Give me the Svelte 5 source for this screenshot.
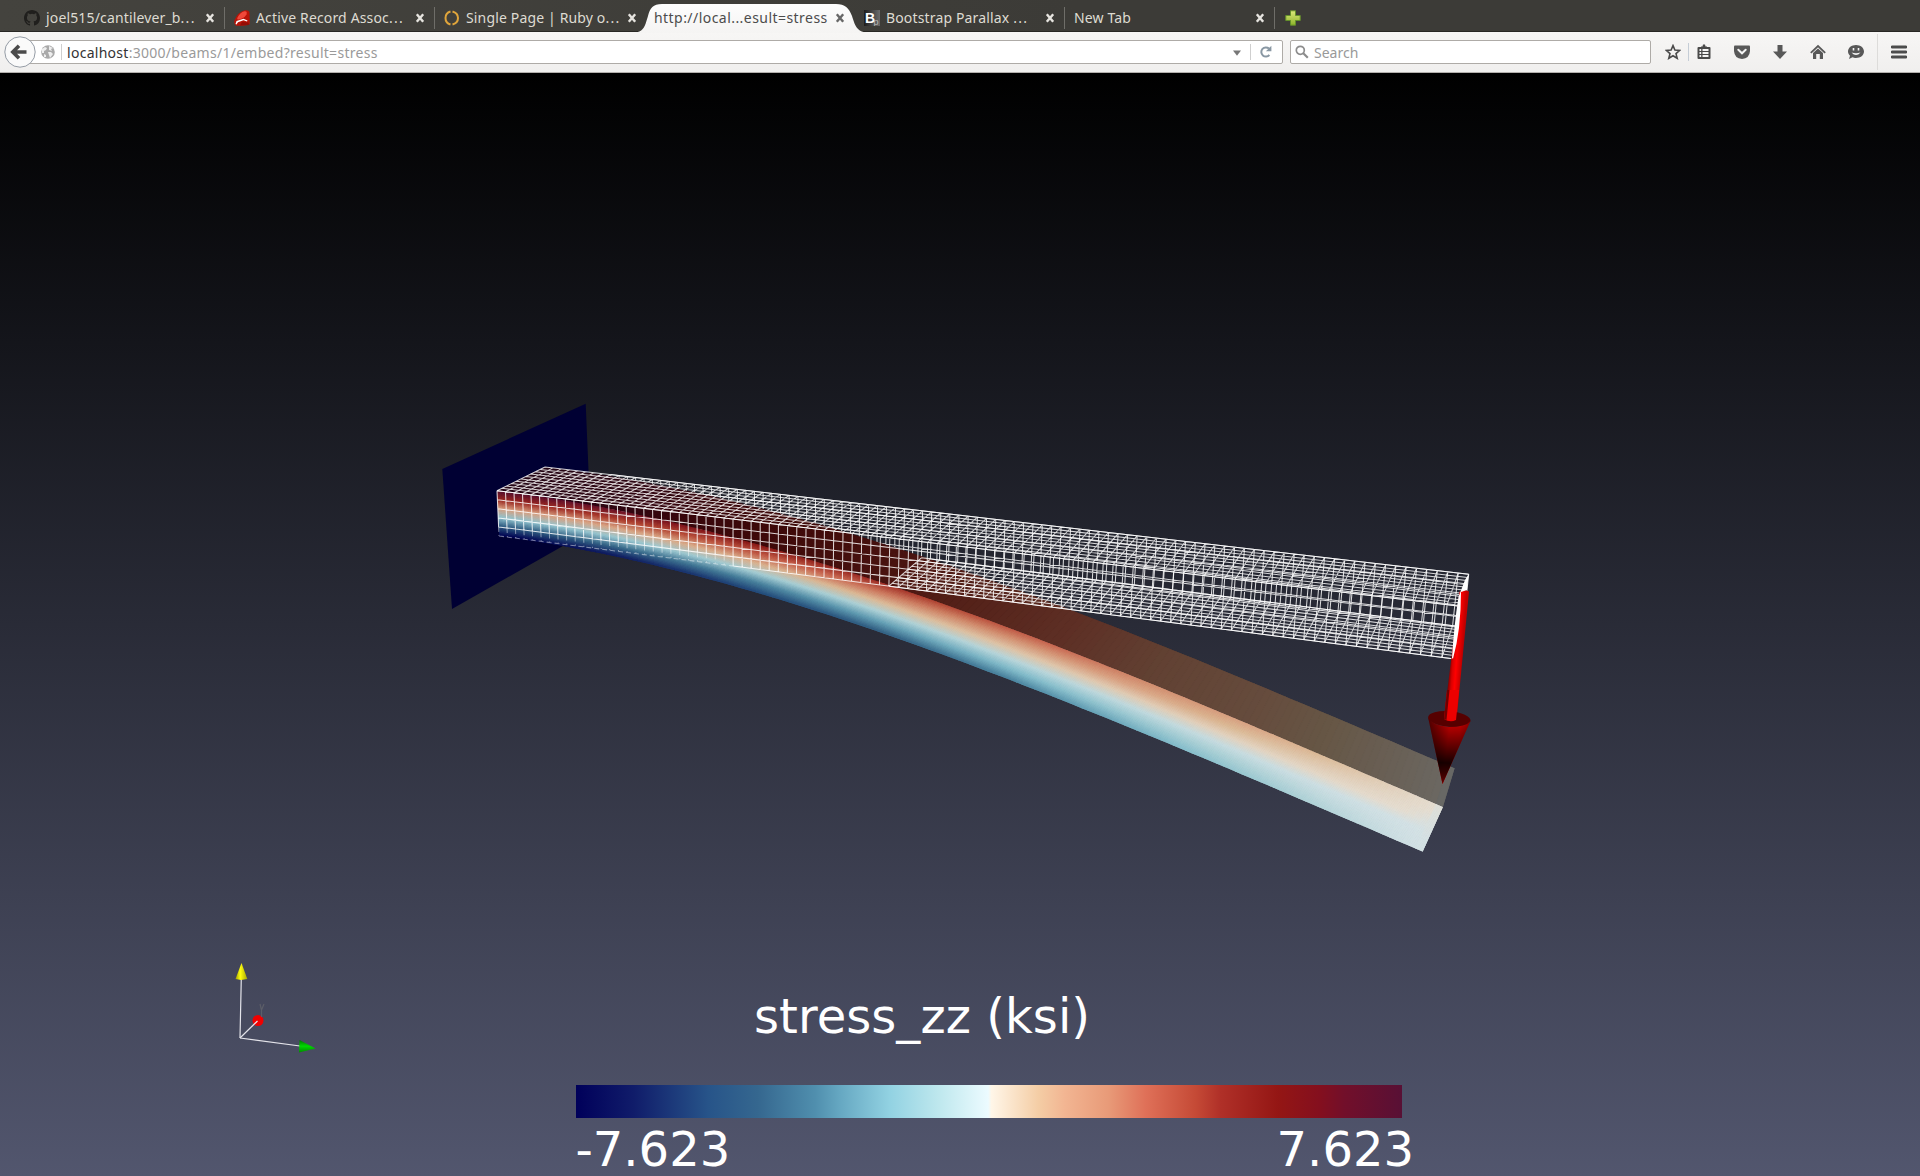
<script>
  const tabs = [
    { title: 'joel515/cantilever_b', icon: 'github', cut: true },
    { title: 'Active Record Assoc', icon: 'ruby', cut: true },
    { title: 'Single Page | Ruby o', icon: 'ring', cut: true },
    { title: 'http://local...esult=stress', active: true },
    { title: 'Bootstrap Parallax ', icon: 'boot', cut: true },
    { title: 'New Tab' },
  ];

  // Diverging colour map, low stress to high stress
  const stops = [
    [0, 0, 0, 90], [0.07, 16, 28, 106], [0.16, 39, 84, 137], [0.22, 53, 103, 143],
    [0.29, 80, 143, 174], [0.32, 102, 168, 194], [0.38, 146, 210, 226], [0.44, 191, 232, 238],
    [0.499, 236, 251, 255], [0.503, 255, 246, 232], [0.56, 244, 205, 165], [0.592, 242, 181, 146],
    [0.645, 232, 154, 120], [0.69, 223, 112, 88], [0.75, 197, 74, 54], [0.78, 176, 48, 40],
    [0.85, 148, 22, 20], [0.9, 132, 15, 30], [0.93, 114, 15, 42], [1, 88, 16, 53],
  ];
  function tone(v) {
    const f = Math.min(1, Math.max(0, 0.5 + v / 2));
    let i = 1;
    while (i < stops.length - 1 && f > stops[i][0]) i++;
    const a = stops[i - 1];
    const b = stops[i];
    const m = (f - a[0]) / (b[0] - a[0]);
    return [1, 2, 3].map((n) => a[n] + (b[n] - a[n]) * m);
  }
  const rgb = (c, shade) => `rgb(${c.map((n) => Math.round(n * shade)).join(',')})`;

  // Colours are interpolated between the mesh nodes, five elements deep
  function faceTone(moment, u) {
    const k = Math.min(4, Math.floor(u * 5));
    const a = tone(moment * (1 - (2 * k) / 5));
    const b = tone(moment * (1 - (2 * (k + 1)) / 5));
    return rgb(a.map((n, i) => n + (b[i] - n) * (u * 5 - k)), 0.9);
  }

  // Undeformed edges in screen space: [start, end]
  const K = 0.88;
  const topFront = [[497, 490.7], [1458, 606]];
  const topBack = [[545, 467], [1468.7, 574.3]];
  const botFront = [[499, 536], [1452.7, 658.7]];
  const botBack = [[547, 510], [1463, 627]];
  const along = (e, t) => {
    const s = (t * K) / (1 - t + t * K);
    return [e[0][0] + (e[1][0] - e[0][0]) * s, e[0][1] + (e[1][1] - e[0][1]) * s];
  };
  const mix = (p, q, u) => [p[0] + (q[0] - p[0]) * u, p[1] + (q[1] - p[1]) * u];
  const pt = (p) => `${p[0].toFixed(1)} ${p[1].toFixed(1)}`;

  function mesh(a, b, rows, from = 0, skipLast = false) {
    let d = '';
    for (let i = from; i <= 100; i++) d += `M${pt(along(a, i / 100))}L${pt(along(b, i / 100))}`;
    for (let r = 0; r <= rows - (skipLast ? 1 : 0); r++) {
      d += `M${pt(mix(along(a, from / 100), along(b, from / 100), r / rows))}L${pt(mix(a[1], b[1], r / rows))}`;
    }
    return d;
  }
  const backMesh = mesh(topBack, botBack, 5, 8);
  const topMesh = mesh(topFront, topBack, 10);
  const frontMesh = mesh(topFront, mix2(topFront, botFront, 0.8), 4, 0) + mesh(mix2(topFront, botFront, 0.8), botFront, 1, 27);
  const frontFaded = mesh(mix2(topFront, botFront, 0.8), botFront, 1, 0).split('M').slice(1, 28).map((s) => 'M' + s).join('')
    + `M${pt(botFront[0])}L${pt(along(botFront, 0.27))}`;
  const bottomMesh = mesh(botFront, botBack, 10, 44);

  function mix2(e, g, u) {
    return [mix(e[0], g[0], u), mix(e[1], g[1], u)];
  }

  // Cantilever deflection
  function bend(e, t, dx, rot, dy) {
    const f = (3 * t * t - t * t * t) / 2;
    const scale = K / (1 - t + t * K);
    const p = along(e, t);
    return [p[0] - dx * f - rot * t * (2 - t), p[1] + dy * f * scale];
  }
  const upper = (t) => bend(topFront, t, 15, 0, 201);
  const lower = (t) => bend(botFront, t, 15, 15, 193);
  const rear = (t) => bend(topBack, t, 14, 0, 194);
  const N = 160;
  const ROWS = 35;
  const frontCells = [];
  const topCells = [];
  for (let i = 0; i < N; i++) {
    const t0 = i / N;
    const t1 = (i + 1) / N;
    const tm = (t0 + t1) / 2;
    const a0 = upper(t0);
    const a1 = upper(t1);
    const b0 = lower(t0);
    const b1 = lower(t1);
    topCells.push({ d: `M${pt(a0)}L${pt(a1)}L${pt(rear(t1))}L${pt(rear(t0))}Z`, c: rgb(tone(1 - tm), 0.42) });
    for (let r = 0; r < ROWS; r++) {
      const u0 = r / ROWS;
      const u1 = (r + 1) / ROWS;
      frontCells.push({
        d: `M${pt(mix(a0, b0, u0))}L${pt(mix(a1, b1, u0))}L${pt(mix(a1, b1, u1))}L${pt(mix(a0, b0, u1))}Z`,
        c: faceTone(1 - tm, (u0 + u1) / 2),
      });
    }
  }
  function outline(f, g) {
    const ts = Array.from({ length: 81 }, (_, i) => i / 80);
    return 'M' + [...ts.map((t) => pt(f(t))), ...ts.reverse().map((t) => pt(g(t)))].join('L') + 'Z';
  }
  const topOutline = outline(rear, upper);
  const frontOutline = outline(upper, lower);
</script>

<div class="window">
  <div class="tabs">
    {#each tabs as tab}
      <div class="tab" class:active={tab.active}>
        {#if tab.active}
          <svg class="shape" width="236" height="29" viewBox="0 0 236 29">
            <defs><linearGradient id="tabfill" x2="0" y2="1"><stop offset="0" stop-color="#fdfdfd" /><stop offset="1" stop-color="#f5f4f3" /></linearGradient></defs>
            <path d="M0 29C12 28 12 21 15 12C17 4 20 0 29 0H203C212 0 216 4 219 12C222 21 223 28 236 29Z" fill="url(#tabfill)" />
          </svg>
        {/if}
        {#if tab.icon === 'github'}
          <svg class="fav" viewBox="0 0 16 16"><path fill="#201f1d" d="M8 0C3.58 0 0 3.58 0 8c0 3.54 2.29 6.53 5.47 7.59.4.07.55-.17.55-.38v-1.49c-2.23.48-2.7-.94-2.7-.94-.36-.92-.89-1.17-.89-1.17-.73-.5.06-.49.06-.49.8.06 1.23.82 1.23.82.72 1.22 1.87.87 2.33.66.07-.52.28-.87.51-1.07-1.78-.2-3.64-.89-3.64-3.95 0-.87.31-1.59.82-2.15-.08-.2-.36-1.02.08-2.12 0 0 .67-.21 2.2.82a7.6 7.6 0 0 1 4 0c1.53-1.04 2.2-.82 2.2-.82.44 1.1.16 1.92.08 2.12.51.56.82 1.27.82 2.15 0 3.07-1.87 3.75-3.65 3.95.29.25.54.73.54 1.48v2.2c0 .21.15.46.55.38A8 8 0 0 0 16 8c0-4.42-3.58-8-8-8z" /></svg>
        {:else if tab.icon === 'ruby'}
          <svg class="fav" viewBox="0 0 16 16"><path fill="#b81408" d="M11 .3Q15.500 0 15.500 3L15.800 14Q15 16 2 15.800Q-.5 14.500 .5 10Q4 2 11 .3Z" /><path fill="#f0483a" d="M10.500 1.300Q13.500 1 12.500 4.500Q10 8.500 5 9.500Q2.500 9.800 3.500 7.500Q6 2.500 10.500 1.300Z" /><path fill="#fff" d="M2.500 11L9.500 8.800L13.500 10.500L13 11.500L9.500 10.200L4 12.200L2.500 14.500L1.500 14Z" /><path fill="#7c0903" d="M8 12L14.500 12.500L15 15L6 15.500Z" opacity=".6" /></svg>
        {:else if tab.icon === 'ring'}
          <svg class="fav" viewBox="0 0 16 16" fill="none" stroke="#e0a53b" stroke-width="2"><path d="M6.500 1.500C3 2.500 1.500 5 1.500 8S3 13.500 6.500 14.500M8.500 1.500C12 2.500 14 5 14 8S12 13.500 8.500 14.500" /></svg>
        {:else if tab.icon === 'boot'}
          <svg class="fav" viewBox="0 0 16 16"><defs><linearGradient id="bt"><stop offset="0" stop-color="#1d1d1d" /><stop offset="1" stop-color="#6c6c6c" /></linearGradient></defs><rect width="16" height="16" fill="url(#bt)" /><text x="1" y="13" class="b">B</text><text x="9.500" y="15" class="p">p</text></svg>
        {/if}
        <span class="title">{tab.title}{#if tab.cut}<span class="dots">...</span>{/if}</span>
        <svg class="close" viewBox="0 0 10 10"><path d="M1.800 1.200L8.200 8.800M8.200 1.200L1.800 8.800" /></svg>
      </div>
    {/each}
    <svg class="plus" viewBox="0 0 16 16"><defs><linearGradient id="pg" x2="0" y2="1"><stop offset="0" stop-color="#dcea7a" /><stop offset="1" stop-color="#8db32a" /></linearGradient></defs><path d="M5.500 .8H10.500V5.500H15.200V10.500H10.500V15.200H5.500V10.500H.8V5.500H5.500Z" fill="url(#pg)" stroke="#64902a" /></svg>
  </div>

  <div class="toolbar">
    <svg class="back" viewBox="0 0 32 32"><circle cx="16" cy="16" r="15.200" fill="#fafafa" stroke="#959ca5" /><path d="M15 9.800L8.800 16L15 22.200M9.500 16H22.500" fill="none" stroke="#4b4b4b" stroke-width="3.600" /></svg>
    <div class="url">
      <svg class="globe" viewBox="0 0 14 14"><circle cx="7" cy="7" r="6.800" fill="#a9a9a9" /><path d="M1 4L4 2L6 3L5 5L3 6L3 8L1 8ZM8 1L12 3L10 4L11 6L8 5ZM7 7L10 7L12 9L9 13L8 10ZM3 9L5 10L5 12L3 12Z" fill="#eee" /></svg>
      <i class="rule"></i>
      <span class="address">localhost<em>:3000/beams/1/embed?result=stress</em></span>
      <svg class="drop" viewBox="0 0 8 6"><path d="M0 .5H8L4 5.800Z" fill="#777" /></svg>
      <i class="rule"></i>
      <svg class="reload" viewBox="0 0 14 14"><path d="M10.400 10A4.600 4.600 0 1 1 10 3.600" fill="none" stroke="#8997a3" stroke-width="2" /><path d="M12.400 .8V6.300H6.900Z" fill="#8997a3" /></svg>
    </div>
    <div class="search">
      <svg viewBox="0 0 14 14"><circle cx="5.300" cy="5.300" r="4" fill="none" stroke="#8c8c8c" stroke-width="1.700" /><path d="M8.300 8.300L12.800 12.800" stroke="#8c8c8c" stroke-width="2.200" /></svg>
      <span>Search</span>
    </div>
    <div class="tools">
      <svg viewBox="0 0 16 16"><path d="M8 1.600L9.900 6L14.700 6.400L11 9.600L12.200 14.300L8 11.700L3.800 14.300L5 9.600L1.300 6.400L6.100 6Z" fill="none" stroke="#4a4a4a" stroke-width="1.600" /></svg>
      <i></i>
      <svg viewBox="0 0 16 16"><path d="M2.500 3H13.500Q14.500 3 14.500 4V14Q14.500 15 13.500 15H2.500Q1.500 15 1.500 14V4Q1.500 3 2.500 3Z" fill="#4a4a4a" /><path d="M5 4.500V2.500H6.500L7 .5H9L9.500 2.500H11V4.500Z" fill="#4a4a4a" /><path d="M3.500 6H5.200M3.500 9H5.200M3.500 12H5.200M6.500 6H12.500M6.500 9H12.500M6.500 12H12.500" stroke="#f4f4f4" stroke-width="1.800" /></svg>
      <svg viewBox="0 0 16 16"><path d="M1 1.500H15Q16 1.500 16 2.500V7Q15.500 14.500 8 15Q.5 14.500 0 7V2.500Q0 1.500 1 1.500Z" fill="#585858" /><path d="M4.300 5.800L8 9.300L11.700 5.800" fill="none" stroke="#f4f4f4" stroke-width="2" stroke-linecap="round" /></svg>
      <svg viewBox="0 0 16 16"><path d="M5.500 1H10.500V7.500H15L8 15L1 7.500H5.500Z" fill="#585858" /></svg>
      <svg viewBox="0 0 16 16"><path d="M.8 8.800L8 2L15.200 8.800" fill="none" stroke="#585858" stroke-width="1.800" /><path d="M3 9L8 4.500L13 9V15H9.800V10H6.200V15H3Z" fill="#585858" /></svg>
      <svg viewBox="0 0 16 16"><path d="M8 1C12.500 1 16 3.800 16 7.500S12.500 14 8 14C6.500 14 5.500 13.800 4.500 13.300L1 15L2 11.800C.8 10.500 0 9.300 0 7.500C0 3.800 3.500 1 8 1Z" fill="#585858" /><path d="M3.500 8.500Q8 13.500 12.500 8.500Q8 10 3.500 8.500Z" fill="#f4f4f4" /><path d="M5.500 4V6.500M10.500 4V6.500" stroke="#f4f4f4" stroke-width="1.600" /></svg>
      <i class="tall"></i>
      <svg viewBox="0 0 16 16"><path d="M1 3H15M1 8H15M1 13H15" stroke="#4c4c4c" stroke-width="2.800" stroke-linecap="round" /></svg>
    </div>
  </div>

  <svg class="scene" viewBox="0 73 1920 1103">
    <defs>
      <linearGradient id="shaft" gradientUnits="userSpaceOnUse" x1="1448" y1="660" x2="1462" y2="661"><stop offset="0" stop-color="#500000" /><stop offset=".35" stop-color="#d80000" /><stop offset=".6" stop-color="#ff0000" /><stop offset="1" stop-color="#c00000" /></linearGradient>
      <linearGradient id="cone" gradientUnits="userSpaceOnUse" x1="1428" y1="730" x2="1470" y2="735"><stop offset="0" stop-color="#500000" /><stop offset=".5" stop-color="#c00000" /><stop offset=".75" stop-color="#b80000" /><stop offset="1" stop-color="#800000" /></linearGradient>
      <linearGradient id="conedark" gradientUnits="userSpaceOnUse" x1="1450" y1="724" x2="1445" y2="784"><stop offset="0" stop-color="#000" stop-opacity="0" /><stop offset=".65" stop-color="#000" stop-opacity=".88" /><stop offset=".8" stop-color="#100000" stop-opacity=".8" /><stop offset="1" stop-color="#700000" /></linearGradient>
      <linearGradient id="yellow"><stop offset="0" stop-color="#a0a000" /><stop offset=".4" stop-color="#ffff10" /><stop offset="1" stop-color="#a8a800" /></linearGradient>
      <linearGradient id="green" x2="0" y2="1"><stop offset="0" stop-color="#007800" /><stop offset=".5" stop-color="#00d800" /><stop offset="1" stop-color="#008a00" /></linearGradient>
      <linearGradient id="map">
        {#each stops as s}<stop offset={s[0]} stop-color={rgb(s.slice(1), 1)} />{/each}
      </linearGradient>
      <clipPath id="topclip"><path d={topOutline} /></clipPath>
      <clipPath id="frontclip"><path d={frontOutline} /></clipPath>
    </defs>

    <polygon points="442.3,469 585.7,403.7 591,530 452,609" fill="#000033" />

    <path class="wire" d={backMesh} />
    <g class="cells" clip-path="url(#topclip)">
      {#each topCells as cell}<path d={cell.d} fill={cell.c} stroke={cell.c} />{/each}
    </g>
    <g class="cells" clip-path="url(#frontclip)">
      {#each frontCells as cell}<path d={cell.d} fill={cell.c} stroke={cell.c} />{/each}
    </g>
    <path class="wire" d={bottomMesh} />
    <path class="wire" d={frontMesh} />
    <path class="wire faded" d={frontFaded} />
    <path class="wire" d={topMesh} />

    <path d="M1459.500 592Q1464 589 1469 591.500L1456.500 720H1443.700Z" fill="url(#shaft)" />
    <ellipse cx="1449.300" cy="719" rx="21.300" ry="7.800" fill="#560000" transform="rotate(5 1449.300 719)" />
    <path d="M1428.200 718Q1432 725 1449 727Q1466 727 1470.500 721L1442.500 784Z" fill="url(#cone)" />
    <path d="M1428.200 718Q1432 725 1449 727Q1466 727 1470.500 721L1442.500 784Z" fill="url(#conedark)" />
    <path d="M1444 719L1447 690H1459L1456 720Q1450 723 1444 719Z" fill="#ec0000" />
    <path d="M1444 719L1447 690H1449.500L1446.500 720Z" fill="#700000" />
    <path d="M1468.700 574.300L1467 590L1461 592Q1461 630 1453 658.700L1452 658Q1454 625 1458.500 597L1465 580Z" fill="#fff" />

    <g class="axes">
      <path d="M240 1038L241.300 978M240 1038L300 1046" />
      <polygon points="241.500,963 247.300,979 241,980 235.500,979" fill="url(#yellow)" />
      <polygon points="299.500,1040 315.500,1048.500 299,1052.500" fill="url(#green)" />
      <circle cx="258" cy="1020.500" r="5.500" fill="#f00000" />
      <path d="M240 1038L257.500 1021" />
      <path class="faint" d="M260 1004L261.500 1010L264 1004M261.500 1010V1017" />
    </g>

    <g class="legend">
      <text x="754" y="1032.500" textLength="336">stress_zz (ksi)</text>
      <rect x="576" y="1085" width="826" height="33" fill="url(#map)" />
      <text x="575.500" y="1166">-7.623</text>
      <text x="1414" y="1166" text-anchor="end">7.623</text>
    </g>
  </svg>
</div>

<style>
  :global(body) { margin: 0; background: #000; }
  .window { width: 1920px; height: 1176px; display: flex; flex-direction: column; overflow: hidden; font-family: 'Noto Sans', 'Open Sans', sans-serif; font-size: 14px; }
  .tabs { height: 32px; box-sizing: border-box; flex: none; display: flex; align-items: center; padding: 4px 0 0 15px; background: linear-gradient(90deg, #44433e, #3c3b37 56%); border-bottom: 1px solid #282724; }
  .tab { position: relative; width: 210px; height: 22px; box-sizing: border-box; display: flex; align-items: center; gap: 6px; padding: 0 9px 0 9px; border-right: 1px solid #6f6e69; color: #dedbd2; }
  .tab:nth-child(3), .tab.active { border-color: transparent; }
  .fav { width: 16px; height: 16px; flex: none; }
  .title { position: relative; flex: 1; white-space: nowrap; letter-spacing: 0.15px; line-height: 20px; }
  .dots { letter-spacing: 1.300px; }
  .close { position: relative; width: 10px; height: 10px; flex: none; }
  .close path { stroke: #e6e4df; stroke-width: 2.400; fill: none; }
  .active { color: #4c4c4c; }
  .active .title { letter-spacing: 0.450px; }
  .active .close path { stroke: #686868; }
  .shape { position: absolute; left: -12px; top: -3px; }
  .b { font: bold 14px 'Liberation Sans', sans-serif; fill: #fff; }
  .p { font: 9px 'Liberation Sans', sans-serif; fill: #bbb; }
  .plus { width: 16px; height: 16px; margin-left: 10px; }
  .toolbar { height: 41px; box-sizing: border-box; flex: none; display: flex; align-items: center; padding-left: 4px; background: linear-gradient(#f7f6f5, #f0efee); border-bottom: 1px solid #b3b0ad; }
  .back { width: 32px; height: 32px; flex: none; position: relative; z-index: 1; }
  .url, .search { height: 24px; box-sizing: border-box; border: 1px solid #aeaba7; border-radius: 2px; background: #fff; display: flex; align-items: center; }
  .url { width: 1258px; margin-left: -11px; padding: 0 9.500px 0 15px; }
  .globe { width: 14px; height: 14px; margin-right: 6px; }
  .rule { width: 1px; height: 16px; background: #cfcfcf; }
  .address { flex: 1; margin-left: 5px; color: #333; white-space: nowrap; letter-spacing: 0.280px; }
  .address em { font-style: normal; color: #9a9a9a; }
  .drop { width: 8px; height: 6px; margin: 2px 9px 0 0; }
  .reload { width: 14px; height: 14px; margin-left: 8px; }
  .search { width: 361px; margin-left: 7px; padding-left: 4px; gap: 5px; color: #999; }
  .search svg { width: 14px; height: 14px; }
  .tools { display: flex; align-items: center; margin-left: 14px; }
  .tools svg { width: 16px; height: 16px; margin-right: 22px; }
  .tools svg:first-child { margin-right: 7px; }
  .tools i { width: 1px; height: 18px; background: #c5cdd6; margin-right: 7px; }
  .tools .tall { height: 36px; background: #dddcda; margin: 0 13px 0 -9px; }
  .tools svg:last-child { margin: 0; }
  .scene { width: 1920px; height: 1103px; flex: none; display: block; background: linear-gradient(#000, #52566e); }
  .cells path { stroke-width: 1; }
  .wire { fill: none; stroke: #fff; stroke-width: 1.050; stroke-opacity: 0.820; }
  .faded { stroke-dasharray: 5 3; stroke-opacity: 0.450; }
  .axes path { stroke: #e4e4ea; stroke-width: 1.200; fill: none; }
  .axes .faint { stroke: #5c5e68; }
  .legend text { font: 48px 'DejaVu Sans', sans-serif; fill: #fff; }
</style>
